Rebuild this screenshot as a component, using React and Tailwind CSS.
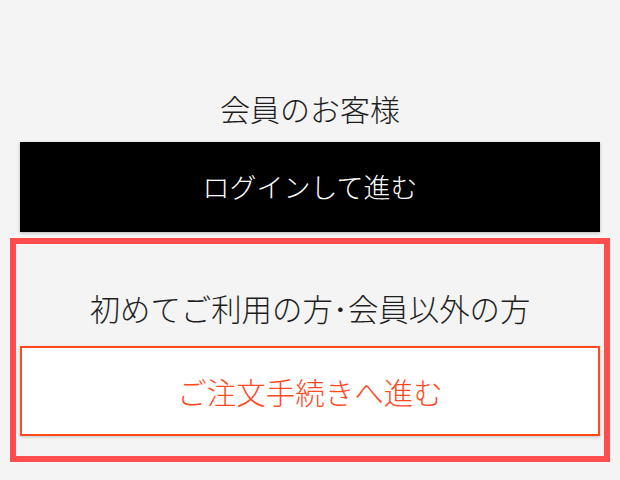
export default function App() {
  return (
    <div
      className="w-full h-[480px] bg-[#f4f4f4] px-[20px] pt-[84px] overflow-hidden"
      style={{ fontFamily: '"Noto Sans CJK JP", "Noto Sans", sans-serif' }}
    >
      <div className="h-[48px] flex items-center justify-center text-[30px] font-light text-[#1e1e1e]">
        会員のお客様
      </div>
      <button className="mt-[10px] w-full h-[90px] bg-black text-white text-[27px] font-light flex items-center justify-center shadow-[0_1px_3px_rgba(0,0,0,0.25)]">
        ログインして進む
      </button>
      <div className="mt-[6px] mx-[-10px] border-[6px] border-[#ff4c4c] px-[4px] pt-[41px] pb-[20px]">
        <div className="h-[48px] flex items-center justify-center text-[30.4px] font-light text-[#1e1e1e]">
          初めてご利用の方･会員以外の方
        </div>
        <button className="mt-[13px] w-full h-[90px] bg-white border-2 border-[#ff4a1f] text-[#ff4a1f] text-[29.5px] font-light flex items-center justify-center shadow-[0_1px_3px_rgba(0,0,0,0.2)]">
          ご注文手続きへ進む
        </button>
      </div>
    </div>
  );
}
